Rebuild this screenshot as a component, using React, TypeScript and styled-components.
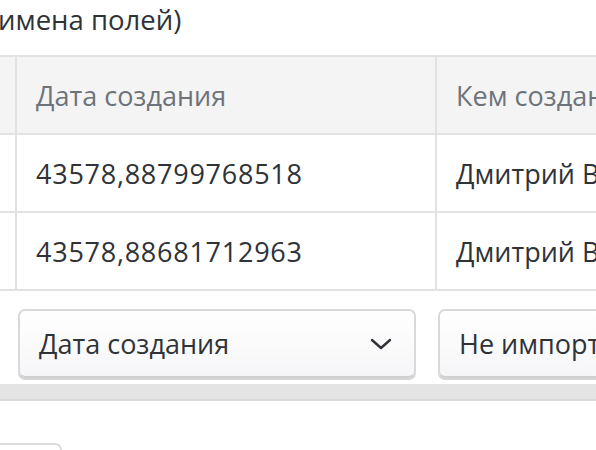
import React from "react";
import styled, { createGlobalStyle } from "styled-components";

const Global = createGlobalStyle`
  html, body { margin: 0; padding: 0; background: #fff; overflow: hidden; }
  body { width: 596px; height: 450px; font-family: "Open Sans", "Noto Sans", sans-serif; }
`;

const Page = styled.div`
  width: 596px;
  height: 450px;
  overflow: hidden;
  display: flex;
  flex-direction: column;
  & > * { flex-shrink: 0; }
`;

const Caption = styled.div`
  font-size: 27.5px;
  line-height: 38px;
  color: #2f3338;
  padding-top: 1px;
  margin-left: -2px;
  height: 54px;
  white-space: nowrap;
`;

const Table = styled.div`
  display: grid;
  grid-template-columns: 17px 420px 420px;
  border-top: 2px solid #e2e2e2;
  width: max-content;
`;

const Cell = styled.div<{ $head?: boolean; $first?: boolean; $num?: boolean }>`
  height: 76px;
  display: flex;
  align-items: center;
  padding-left: ${(p) => (p.$first ? "0" : "19px")};
  border-right: 2px solid #e2e2e2;
  border-bottom: 2px solid #e2e2e2;
  background: ${(p) => (p.$head ? "#f4f4f4" : "#fff")};
  color: ${(p) => (p.$head ? "#6e737a" : "#2f3338")};
  font-size: 27px;
  letter-spacing: ${(p) => (p.$num ? "0.75px" : "0")};
  white-space: nowrap;
  overflow: hidden;
`;

const SelectRow = styled.div`
  display: grid;
  grid-template-columns: 17px 420px 420px;
  padding: 18px 0 6px;
  width: max-content;
`;

const SelectWrap = styled.div`
  padding-left: 1px;
  padding-right: 21px;
`;

const Select = styled.div`
  height: 65px;
  border: 2px solid #d9d9d9;
  border-bottom-color: #cfcfcf;
  border-radius: 7px;
  background: linear-gradient(#ffffff, #f6f6f8);
  box-shadow: 0 2px 0 #d6d6d6;
  display: flex;
  align-items: center;
  justify-content: space-between;
  padding: 0 22px 0 19px;
  font-size: 27px;
  color: #2f3338;
  white-space: nowrap;
  overflow: hidden;
`;

const ScrollTrack = styled.div`
  height: 15px;
  background: #e4e4e4;
  border-bottom: 2px solid #d9d9d9;
`;

const Bottom = styled.div`
  padding-top: 42px;
`;

const SmallButton = styled.div`
  width: 60px;
  height: 20px;
  border: 2px solid #dcdcdc;
  border-left: none;
  border-radius: 0 7px 0 0;
`;

const Chevron = () => (
  <svg width="22" height="14" viewBox="0 0 22 14" fill="none">
    <path d="M2 3 L11 11 L20 3" stroke="#2f3338" strokeWidth="2.4" strokeLinecap="round" strokeLinejoin="round" />
  </svg>
);

export default function App() {
  return (
    <Page>
      <Global />
      <Caption>имена полей)</Caption>
      <Table>
        <Cell $head $first />
        <Cell $head>Дата создания</Cell>
        <Cell $head>Кем создано</Cell>
        <Cell $first />
        <Cell $num>43578,88799768518</Cell>
        <Cell>Дмитрий Васильев</Cell>
        <Cell $first />
        <Cell $num>43578,88681712963</Cell>
        <Cell>Дмитрий Васильев</Cell>
      </Table>
      <SelectRow>
        <div />
        <SelectWrap>
          <Select>
            <span>Дата создания</span>
            <Chevron />
          </Select>
        </SelectWrap>
        <SelectWrap>
          <Select>
            <span>Не импортировать</span>
            <Chevron />
          </Select>
        </SelectWrap>
      </SelectRow>
      <ScrollTrack />
      <Bottom>
        <SmallButton />
      </Bottom>
    </Page>
  );
}
